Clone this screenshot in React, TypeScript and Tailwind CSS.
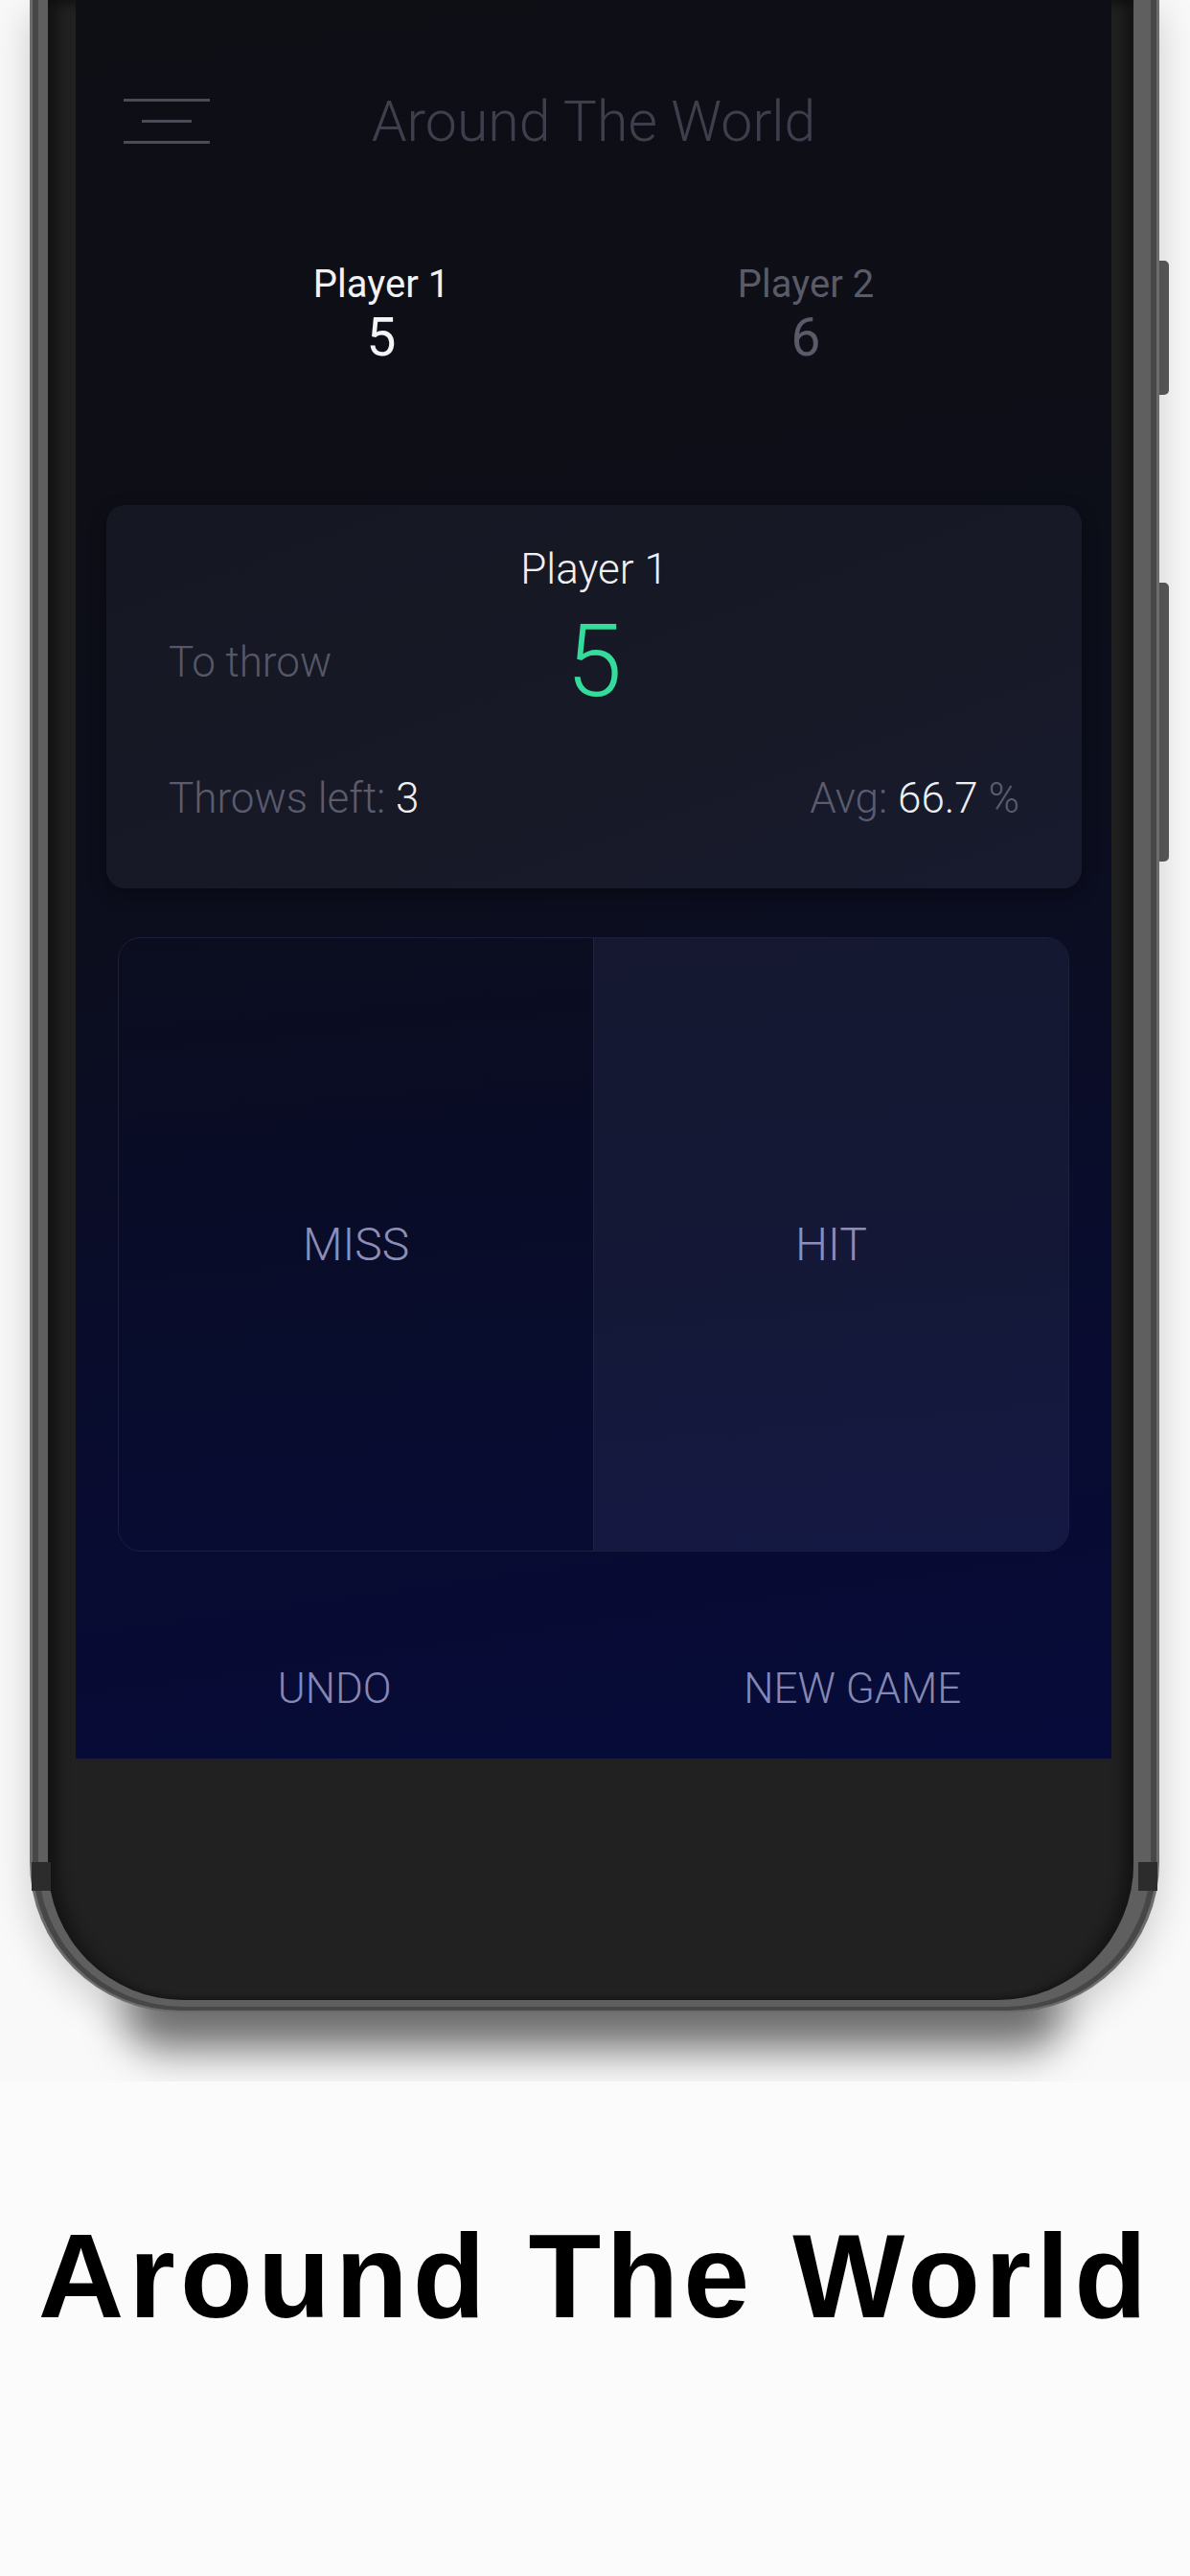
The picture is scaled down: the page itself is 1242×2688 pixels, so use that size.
const Hamburger = () => (
  <div className="flex w-[90px] flex-col items-center gap-[19px]">
    <span className="block h-[3px] w-[90px] bg-[#4a4b58]" />
    <span className="block h-[3px] w-[52px] bg-[#4a4b58]" />
    <span className="block h-[3px] w-[90px] bg-[#4a4b58]" />
  </div>
)

const PlayerScore = ({ name, score, active }: { name: string; score: number; active?: boolean }) => (
  <div className="flex w-[443px] flex-col items-center">
    <span className={active ? 'text-[40px] leading-none text-[#f2f2f4]' : 'text-[40px] leading-none text-[#5a5b69]'}>
      {name}
    </span>
    <span className={active ? 'mt-[8px] text-[55px] leading-none text-[#f4f4f6]' : 'mt-[8px] text-[55px] leading-none text-[#5a5b69]'}>
      {score}
    </span>
  </div>
)

const Screen = () => (
  <div className="flex h-[1835px] w-[1081px] flex-col bg-[linear-gradient(172deg,#0e0f15_0%,#0d0e17_30%,#0c0e1e_50%,#090c2c_72%,#060b3a_100%)] font-['Roboto',sans-serif]">
    {/* header */}
    <div className="mt-[97px] grid h-[59px] grid-cols-[1fr_auto_1fr] items-center">
      <div className="pl-[50px]">
        <Hamburger />
      </div>
      <h1 className="text-[59px] leading-none font-light text-[#3d3f4d]">Around The World</h1>
      <div />
    </div>

    {/* players */}
    <div className="mt-[121px] flex justify-center">
      <PlayerScore name="Player 1" score={5} active />
      <PlayerScore name="Player 2" score={6} />
    </div>

    {/* current turn card */}
    <div className="mt-[147px] mr-[31px] ml-[32px] rounded-[20px] bg-[linear-gradient(160deg,#151722_0%,#171927_60%,#181b2e_100%)] px-[65px] pt-[45px] pb-[72px] shadow-[0_6px_18px_rgba(0,0,0,0.35)]">
      <div className="text-center text-[44px] leading-none font-light text-[#f0f0f2]">Player 1</div>
      <div className="mt-[22px] grid h-[105px] grid-cols-3 items-center">
        <span className="text-[44px] leading-none font-light text-[#555768]">To throw</span>
        <span className="text-center text-[105px] leading-none font-light text-[#33dc9b]">5</span>
        <span />
      </div>
      <div className="mt-[68px] flex items-baseline justify-between text-[44px] leading-none font-light">
        <span className="text-[#5a5c6e]">
          Throws left: <span className="text-[#eeeef2]">3</span>
        </span>
        <span className="text-[#5a5c6e]">
          Avg: <span className="text-[#eeeef2]">66.7</span> %
        </span>
      </div>
    </div>

    {/* miss / hit */}
    <div className="mx-[44px] mt-[51px] flex h-[641px] overflow-hidden rounded-[24px] border border-[#1c2040]">
      <button className="flex flex-1 items-center justify-center bg-[linear-gradient(175deg,#0b0d1f_0%,#090c2a_55%,#080c34_100%)] text-[48px] leading-none font-light text-[#8c8eb7]">
        MISS
      </button>
      <div className="w-px bg-[#1f2342]" />
      <button className="flex flex-1 items-center justify-center bg-[linear-gradient(175deg,#151830_0%,#141837_55%,#141944_100%)] text-[48px] leading-none font-light text-[#8c8eb7]">
        HIT
      </button>
    </div>

    {/* actions */}
    <div className="mt-[121px] flex text-[44px] leading-none font-light text-[#8587b4]">
      <button className="flex-1 text-center">UNDO</button>
      <button className="flex-1 text-center">NEW GAME</button>
    </div>
  </div>
)

const Phone = () => (
  <div className="relative ml-[31px] w-[1179px] rounded-b-[157px] bg-[#6c6c6c] px-[3px] pb-[2px] shadow-[0_12px_40px_rgba(0,0,0,0.18)]">
    <div className="rounded-b-[155px] bg-[#474747] px-[6px] pb-[4px]">
      <div className="rounded-b-[151px] bg-[#5f5f5f] pr-[18px] pb-[7px] pl-[10px]">
        <div className="rounded-b-[142px] bg-[#212121] pr-[23px] pb-[252px] pl-[29px] shadow-[inset_10px_0_14px_rgba(0,0,0,0.45),inset_-10px_0_14px_rgba(0,0,0,0.45),inset_0_-10px_16px_rgba(255,255,255,0.04)]">
          <Screen />
        </div>
      </div>
    </div>
    {/* antenna bands */}
    <span className="absolute top-[1943px] left-[2px] h-[30px] w-[20px] bg-[#2c2c2c]" />
    <span className="absolute top-[1943px] right-[2px] h-[30px] w-[20px] bg-[#2c2c2c]" />
  </div>
)

export default function App() {
  return (
    <div className="w-[1242px] bg-[#fbfbfb]">
      <div className="relative h-[2172px] overflow-hidden bg-[#f9f9f9]">
        <div className="absolute top-[2060px] left-[130px] h-[80px] w-[980px] rounded-full bg-black/50 blur-[22px]" />
        {/* side buttons */}
        <span className="absolute top-[272px] left-[1206px] h-[140px] w-[14px] rounded-r-[5px] bg-[#5a5a5a]" />
        <span className="absolute top-[608px] left-[1206px] h-[291px] w-[14px] rounded-r-[5px] bg-[#5a5a5a]" />
        <Phone />
      </div>
      <div className="h-[516px] pt-[141px] text-center">
        <h2 className="font-['Liberation_Sans',Arial,sans-serif] text-[124px] leading-none font-bold tracking-[5.2px] text-black">
          Around The World
        </h2>
      </div>
    </div>
  )
}
